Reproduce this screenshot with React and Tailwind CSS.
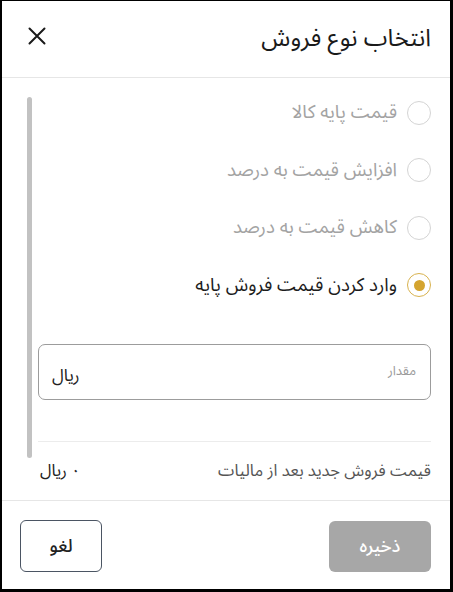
import React from "react";

const font = { fontFamily: '"Noto Sans Arabic", "DejaVu Sans", sans-serif' };

function Radio({ label, selected }) {
  return (
    <div className="flex h-[57.5px] items-center gap-[10px]">
      <span
        className={
          "flex h-[24px] w-[24px] shrink-0 items-center justify-center rounded-full border " +
          (selected ? "border-[#d8b24e]" : "border-[#d4d4d4]")
        }
      >
        {selected && <span className="h-[11px] w-[11px] rounded-full bg-[#d4a42f]" />}
      </span>
      <span className={"text-[18.6px] leading-none " + (selected ? "text-[#1c1c1c]" : "text-[#a3a3a3]")}>
        {label}
      </span>
    </div>
  );
}

export default function App() {
  return (
    <div
      dir="rtl"
      style={font}
      className="flex h-[592px] w-[453px] flex-col border-b-[3px] border-l-[2px] border-r-[3px] border-t-[1px] border-black bg-white"
    >
      {/* header */}
      <div className="flex h-[77px] shrink-0 items-center justify-between border-b border-[#e6e6e6] pl-[26px] pr-[19px]">
        <h1 className="text-[24px] font-normal leading-none text-[#1a1a1a]">انتخاب نوع فروش</h1>
        <svg width="18" height="18" viewBox="0 0 18 18" className="mb-[6px]">
          <path d="M1.5 1.5 L16.5 16.5 M16.5 1.5 L1.5 16.5" stroke="#1a1a1a" strokeWidth="2" strokeLinecap="round" />
        </svg>
      </div>

      {/* body */}
      <div className="flex min-h-0 flex-1 flex-col">
        <div className="flex items-start gap-[6px] pl-[25px] pr-[19px]">
          <div className="flex flex-1 flex-col pt-[6px]">
            <Radio label="قیمت پایه کالا" />
            <Radio label="افزایش قیمت به درصد" />
            <Radio label="کاهش قیمت به درصد" />
            <Radio label="وارد کردن قیمت فروش پایه" selected />
            <div className="mt-[30px] flex h-[56px] items-center justify-between rounded-[7px] border border-[#9c9c9c] pl-[13px] pr-[14px]">
              <span className="mb-[1px] text-[13px] text-[#9a9a9a]">مقدار</span>
              <span className="mt-[9px] text-[17px] text-[#222]">ریال</span>
            </div>
            <div className="mt-[41px] h-px bg-[#ececec]" />
          </div>
          <div className="mt-[19px] h-[361px] w-[5px] shrink-0 rounded-full bg-[#c2c2c2]" />
        </div>
        <div className="mt-[1px] flex items-center justify-between pl-[38px] pr-[19px]">
          <span className="text-[16.5px] text-[#555]">قیمت فروش جدید بعد از مالیات</span>
          <span className="text-[16.5px] text-[#222]">۰ ریال</span>
        </div>
      </div>

      {/* footer */}
      <div className="flex shrink-0 items-center justify-between border-t border-[#e6e6e6] pb-[17px] pl-[18px] pr-[19px] pt-[19px]">
        <button className="h-[51px] w-[102px] rounded-[6px] bg-[#a7a7a7] text-[18px] font-medium text-white">
          ذخیره
        </button>
        <button className="h-[52px] w-[82px] rounded-[6px] border border-[#4b5563] bg-white text-[18px] font-medium text-[#222]">
          لغو
        </button>
      </div>
    </div>
  );
}
